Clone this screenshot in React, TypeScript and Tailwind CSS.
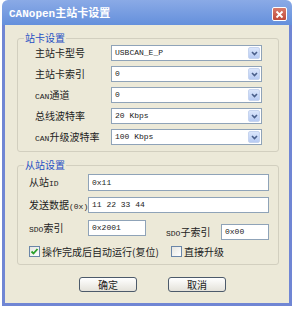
import React from 'react';

const cjk = { fontFamily: '"Noto Sans CJK SC", "Liberation Sans", sans-serif' };

const Combo = ({ value }: { value: string }) => (
  <div className="flex items-center w-[151px] h-[16px] border border-[#8fa3b8] bg-white pl-[3px] pr-[1px]">
    <span className="flex-1 text-[8px] leading-none text-[#222]" style={{ fontFamily: '"Liberation Mono", monospace' }}>
      {value}
    </span>
    <span className="flex items-center justify-center w-[12px] h-[12px] rounded-[2px] bg-gradient-to-b from-[#dbe6fb] to-[#b7cbf3] border border-[#c6d4ef]">
      <svg width="7" height="5" viewBox="0 0 7 5">
        <path d="M1 1 L3.5 3.5 L6 1" stroke="#4a5f8a" strokeWidth="1.6" fill="none" />
      </svg>
    </span>
  </div>
);

const TextBox = ({ value, w, h = 16 }: { value: string; w: number; h?: number }) => (
  <div
    className="flex items-center border border-[#8fa3b8] bg-white pl-[3px]"
    style={{ width: w, height: h }}
  >
    <span className="text-[8px] leading-none text-[#222]" style={{ fontFamily: '"Liberation Mono", monospace' }}>
      {value}
    </span>
  </div>
);

const Label = ({ children, w }: { children: React.ReactNode; w: number }) => (
  <div className="text-[10px] leading-none text-[#222] whitespace-nowrap" style={{ ...cjk, width: w }}>
    {children}
  </div>
);

// ascii parts of the labels are narrow in the original
const Asc = ({ children }: { children: React.ReactNode }) => (
  <span className="text-[8px]" style={{ fontFamily: '"Liberation Mono", monospace' }}>{children}</span>
);

const Check = ({ checked, label }: { checked?: boolean; label: string }) => (
  <div className="flex items-center gap-[2px] whitespace-nowrap">
    <span className="flex items-center justify-center w-[11px] h-[11px] border border-[#6a86a8] bg-gradient-to-br from-[#e6e6e0] to-white">
      {checked && (
        <svg width="9" height="9" viewBox="0 0 9 9">
          <path d="M1.5 4.5 L3.5 6.5 L7.5 2" stroke="#2aa02a" strokeWidth="1.8" fill="none" />
        </svg>
      )}
    </span>
    <span className="text-[10px] leading-none text-[#222]" style={cjk}>{label}</span>
  </div>
);

const Button = ({ label }: { label: string }) => (
  <div className="flex items-center justify-center w-[58px] h-[15px] rounded-[3px] border border-[#4c5a6a] bg-gradient-to-b from-white to-[#e4e2da] text-[10px] leading-none text-[#222]" style={cjk}>
    {label}
  </div>
);

export default function App() {
  return (
    <div className="w-[295px] h-[309px] bg-white">
      <div className="ml-[2px] w-[290px] flex flex-col">
        {/* title bar */}
        <div className="h-[25px] rounded-t-[6px] bg-gradient-to-b from-[#8aaae6] to-[#6590dc] flex items-center justify-between pl-[7px] pr-[5px] pt-[3px]">
          <span className="text-[11px] font-bold text-white leading-none" style={{ fontFamily: '"Liberation Mono", "Noto Sans CJK SC", monospace' }}>
            CANopen主站卡设置
          </span>
          <span className="flex items-center justify-center w-[15px] h-[14px] rounded-[2px] border border-white bg-gradient-to-b from-[#d87a6a] to-[#c04a3a]">
            <svg width="9" height="9" viewBox="0 0 9 9">
              <path d="M1.5 1.5 L7.5 7.5 M7.5 1.5 L1.5 7.5" stroke="white" strokeWidth="1.8" />
            </svg>
          </span>
        </div>

        {/* body */}
        <div className="h-[281px] bg-[#ece9d8] border-x-[3px] border-b-[3px] border-[#7086d4] pl-[12px]">
          <fieldset className="mt-[7px] w-[262px] border border-[#d2cfbf] rounded-[3px] pt-[1px] pb-[6px]">
            <legend className="ml-[6px] px-[1px] text-[10px] leading-[12px] text-[#1f4fc4]" style={cjk}>站卡设置</legend>
            <div className="flex flex-col gap-[5px] pl-[17px]">
              <div className="flex items-center"><Label w={76}>主站卡型号</Label><Combo value="USBCAN_E_P" /></div>
              <div className="flex items-center"><Label w={76}>主站卡索引</Label><Combo value="0" /></div>
              <div className="flex items-center"><Label w={76}><Asc>CAN</Asc>通道</Label><Combo value="0" /></div>
              <div className="flex items-center"><Label w={76}>总线波特率</Label><Combo value="20 Kbps" /></div>
              <div className="flex items-center"><Label w={76}><Asc>CAN</Asc>升级波特率</Label><Combo value="100 Kbps" /></div>
            </div>
          </fieldset>

          <fieldset className="mt-[7px] w-[262px] h-[106px] border border-[#d2cfbf] rounded-[3px] pt-[3px]">
            <legend className="ml-[6px] px-[1px] text-[10px] leading-[12px] text-[#1f4fc4]" style={cjk}>从站设置</legend>
            <div className="flex flex-col pl-[11px]">
              <div className="flex items-center"><Label w={59}>从站<Asc>ID</Asc></Label><TextBox value="0x11" w={181} h={17} /></div>
              <div className="flex items-center mt-[6px]"><Label w={59}>发送数据<Asc>(0x)</Asc></Label><TextBox value="11 22 33 44" w={181} /></div>
              <div className="flex items-start mt-[7px]">
                <div className="pt-[3px]"><Label w={59}><Asc>SDO</Asc>索引</Label></div>
                <TextBox value="0x2001" w={58} />
                <div className="ml-[20px] mt-[7px]"><Label w={55}><Asc>SDO</Asc>子索引</Label></div>
                <div className="mt-[4px]"><TextBox value="0x00" w={48} /></div>
              </div>
              <div className="flex items-center mt-[6px]">
                <div className="w-[142px]"><Check checked label="操作完成后自动运行(复位)" /></div>
                <Check label="直接升级" />
              </div>
            </div>
          </fieldset>

          <div className="flex mt-[12px] ml-[62px] gap-[31px]">
            <Button label="确定" />
            <Button label="取消" />
          </div>
        </div>
      </div>
    </div>
  );
}
